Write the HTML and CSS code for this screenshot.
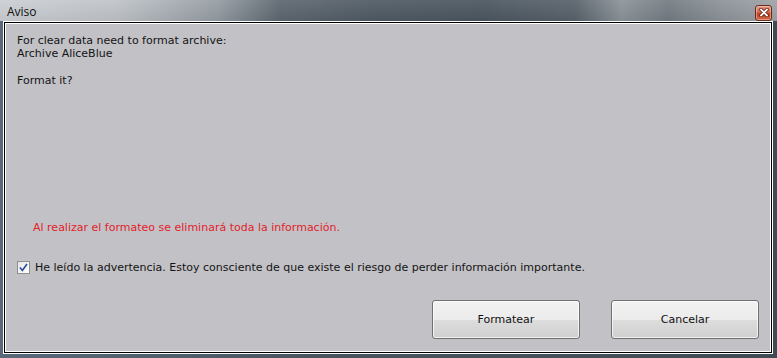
FILE: index.html
```html
<!DOCTYPE html>
<html>
    <head>
        <meta charset="utf-8">
        <title>Aviso</title>
        <link rel="stylesheet" href="styles.css">
    </head>
    <body>
        <div class="window">
            <div class="titlebar">
                <span class="title">Aviso</span>
                <button class="close" title="Cerrar">
                    <svg width="10" height="9" viewBox="0 0 10 9">
                        <path d="M2 1.5 L8 7.5 M8 1.5 L2 7.5" stroke="#5a1a0c" stroke-width="3.4" stroke-linecap="round"/>
                        <path d="M2 1.5 L8 7.5 M8 1.5 L2 7.5" stroke="#ffffff" stroke-width="1.8" stroke-linecap="round"/>
                    </svg>
                </button>
            </div>

            <div class="panel">
                <div class="message">
                    <p>For clear data need to format archive:</p>
                    <p>Archive AliceBlue</p>
                    <p class="question">Format it?</p>
                </div>

                <p class="warning">Al realizar el formateo se eliminará toda la información.</p>

                <label class="confirm">
                    <span class="checkbox">
                        <svg width="9" height="9" viewBox="0 0 9 9">
                            <path d="M1 4.5 L3.4 7.5 L8 1" fill="none" stroke="#2b4a9b" stroke-width="1.6"/>
                        </svg>
                    </span>
                    He leído la advertencia. Estoy consciente de que existe el riesgo de perder información importante.
                </label>

                <div class="button-group">
                    <button class="btn">Formatear</button>
                    <button class="btn">Cancelar</button>
                </div>
            </div>
        </div>
    </body>
</html>
```

FILE: styles.css
```css
:root {
    --frame: #47525c;
    --panel: #c2c1c6;
    --text: #141414;
    --danger: #e3212b;
}

* {
    margin: 0;
    padding: 0;
    box-sizing: border-box;
}

body {
    font-family: 'DejaVu Sans', Verdana, sans-serif;
    font-size: 11px;
    color: var(--text);
}

.window {
    width: 777px;
    height: 358px;
    display: flex;
    flex-direction: column;
    background: linear-gradient(90deg, #59697a 0%, #4a5560 40%, #414b55 100%);
}

.titlebar {
    height: 21px;
    display: flex;
    align-items: center;
    justify-content: space-between;
    padding: 0 5px 0 7px;
    background:
        linear-gradient(180deg, rgba(255,255,255,0.08) 0%, rgba(0,0,0,0.05) 100%),
        linear-gradient(90deg, #cbcfd3 0%, #bfc3c7 15%, #949ca3 28%, #5d6770 36%, #4f5a64 48%, #4b5660 62%, #58626b 74%, #8b9399 80%, #737c83 86%, #8c9398 93%, #9ea3a7 100%);
}

.title {
    font-family: 'Open Sans', 'DejaVu Sans', sans-serif;
    font-size: 12px;
    color: #111;
    padding-top: 2px;
}

.close {
    width: 17px;
    height: 16px;
    margin-top: 4px;
    display: flex;
    align-items: center;
    justify-content: center;
    border: 1px solid #6b2a1c;
    border-radius: 3px;
    background: linear-gradient(180deg, #e39a85 0%, #d6664a 45%, #c0401f 55%, #d36a46 100%);
    box-shadow: inset 0 0 0 1px rgba(255,255,255,0.35);
}

.panel {
    flex: 1;
    margin: 1px 5px 5px 4px;
    display: flex;
    flex-direction: column;
    padding: 11px 12px 13px 12px;
    background: var(--panel);
    border: 1px solid #000;
    box-shadow: 0 0 0 1px #fff, inset 0 0 0 1px #fff;
}

.message p {
    line-height: 13px;
}

.message .question {
    margin-top: 14px;
}

.warning {
    margin-top: auto;
    padding-left: 16px;
    line-height: 13px;
    color: var(--danger);
}

.confirm {
    margin-top: 27px;
    display: flex;
    align-items: center;
    gap: 5px;
    line-height: 13px;
}

.checkbox {
    width: 13px;
    height: 13px;
    display: flex;
    align-items: center;
    justify-content: center;
    border: 1px solid #8e8f8f;
    background: linear-gradient(135deg, #e6e6e6 0%, #ffffff 100%);
}

.button-group {
    margin-top: 26px;
    display: flex;
    justify-content: flex-end;
    gap: 31px;
}

.btn {
    width: 148px;
    height: 39px;
    font-family: inherit;
    font-size: 11px;
    color: #111;
    border: 1px solid #707070;
    border-radius: 3px;
    background: linear-gradient(180deg, #f2f2f2 0%, #ebebeb 50%, #dddddd 51%, #cfcfcf 100%);
    box-shadow: inset 0 0 0 1px rgba(255,255,255,0.7);
}
```
